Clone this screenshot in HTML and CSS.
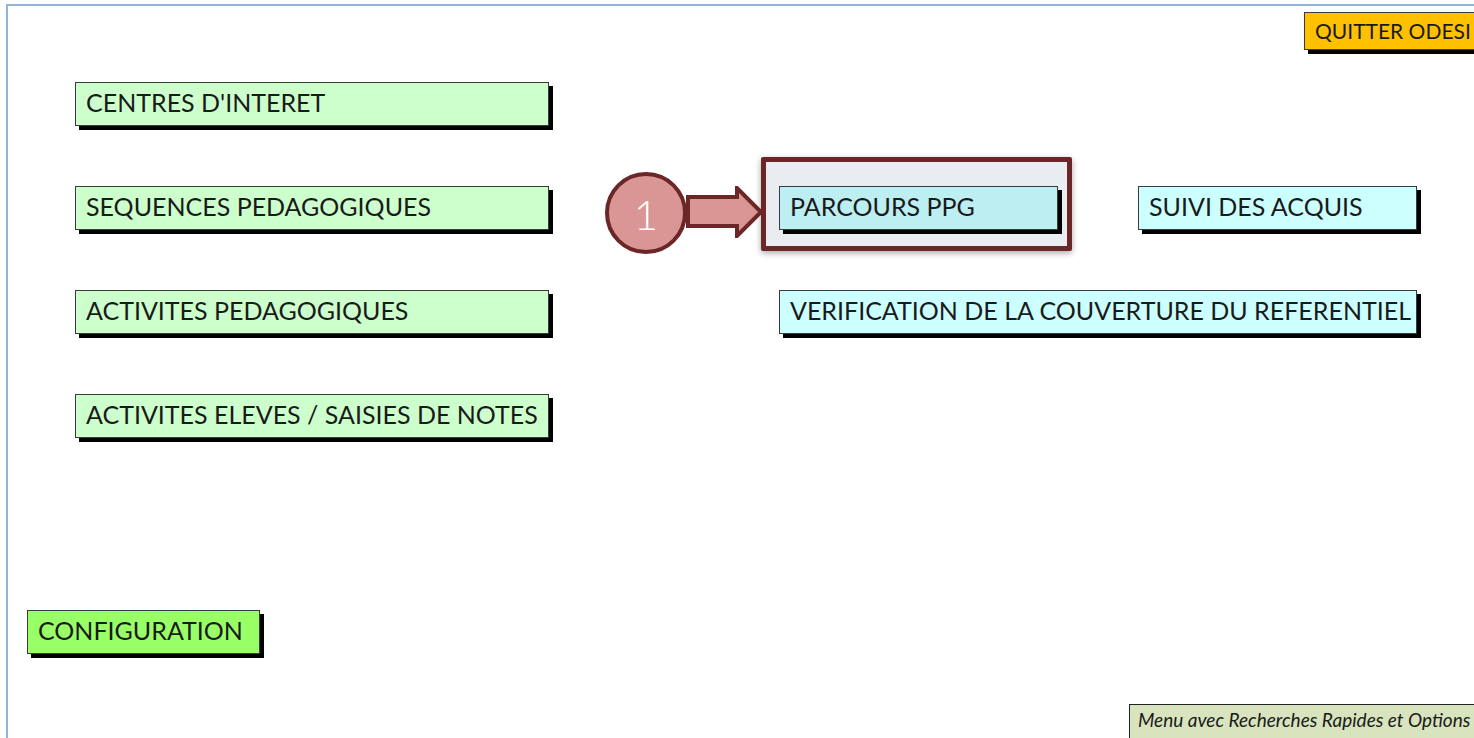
FILE: index.html
```html
<!DOCTYPE html>
<html lang="fr">
<head>
    <meta charset="UTF-8">
    <title>ODESI - Menu principal</title>
    <link rel="stylesheet" href="styles.css">
</head>
<body>
<div class="frame">
    <div class="topbar">
        <div class="btn btn-quit">QUITTER ODESI</div>
    </div>

    <div class="menu">
        <div class="btn btn-green row1">CENTRES D'INTERET</div>

        <div class="btn btn-green row2">SEQUENCES PEDAGOGIQUES</div>
        <div class="pointer-cell row2">
            <div class="annotation">
                <div class="highlight"></div>
                <div class="bubble">1</div>
                <svg class="arrow" width="78" height="52" viewBox="0 0 78 52">
                    <polygon points="2,11 51,11 51,2 75,26 51,50 51,40 2,40"
                             fill="#d99694" stroke="#6b2727" stroke-width="4" stroke-linejoin="miter"/>
                </svg>
            </div>
            <div class="btn btn-ppg">PARCOURS PPG</div>
        </div>
        <div class="btn btn-cyan row2 col3">SUIVI DES ACQUIS</div>

        <div class="btn btn-green row3">ACTIVITES PEDAGOGIQUES</div>
        <div class="btn btn-cyan row3 span2">VERIFICATION DE LA COUVERTURE DU REFERENTIEL</div>

        <div class="btn btn-green row4">ACTIVITES ELEVES / SAISIES DE NOTES</div>
    </div>

    <div class="btn btn-config">CONFIGURATION</div>

    <div class="footer-label">Menu avec Recherches Rapides et Options</div>
</div>
</body>
</html>
```

FILE: styles.css
```css
body {
    margin: 0;
    overflow: hidden;
    background-color: #fff;
    font-family: Lato, "Open Sans", sans-serif;
    color: #1a1a1a;
}
.frame {
    margin: 4px 0 0 6px;
    height: 800px;
    border-top: 2px solid #95b3d7;
    border-left: 2px solid #95b3d7;
}
.topbar {
    height: 44px;
    padding: 6px 0 0 1296px;
    white-space: nowrap;
    box-sizing: border-box;
}
.btn {
    box-sizing: border-box;
    height: 44px;
    padding: 0 10px 4px;
    display: flex;
    align-items: center;
    font-size: 25px;
    white-space: nowrap;
    border: 1px solid #3a3a3a;
    box-shadow: 4px 4px 0 #000;
}
.btn-quit {
    display: inline-flex;
    height: 38px;
    width: 200px;
    padding-bottom: 2px;
    font-size: 21px;
    background-color: #ffc000;
}
.menu {
    margin-top: 32px;
    padding-left: 67px;
    display: grid;
    grid-template-columns: 704px 359px 279px;
    grid-auto-rows: 44px;
    row-gap: 60px;
}
.btn-green {
    grid-column: 1;
    width: 474px;
    background-color: #ccffcc;
}
.row1 { grid-row: 1; }
.row2 { grid-row: 2; }
.row3 { grid-row: 3; }
.row4 { grid-row: 4; }
.col3 { grid-column: 3; }
.btn-cyan {
    background-color: #ccffff;
}
.span2 {
    grid-column: 2 / span 2;
}
.pointer-cell {
    grid-column: 2;
    position: relative;
    width: 279px;
}
.btn-ppg {
    position: relative;
    z-index: 1;
    background-color: #bdeef2;
}
.annotation {
    position: absolute;
    left: 0;
    top: 0;
}
.highlight {
    position: absolute;
    left: -18px;
    top: -29px;
    width: 311px;
    height: 94px;
    box-sizing: border-box;
    border: 5px solid #6b2727;
    border-radius: 2px;
    background-color: #e9edf2;
    box-shadow: 0 2px 6px rgba(0, 0, 0, 0.35);
}
.bubble {
    position: absolute;
    left: -174px;
    top: -14px;
    width: 82px;
    height: 82px;
    box-sizing: border-box;
    padding-top: 2px;
    border: 4px solid #6b2727;
    border-radius: 50%;
    background-color: #d99694;
    color: #fff;
    font-size: 42px;
    font-weight: 300;
    display: flex;
    align-items: center;
    justify-content: center;
}
.arrow {
    position: absolute;
    left: -93px;
    top: 0;
}
.btn-config {
    margin: 172px 0 0 19px;
    width: 233px;
    background-color: #99ff66;
}
.footer-label {
    margin: 50px 0 0 1121px;
    height: 40px;
    width: 400px;
    box-sizing: border-box;
    padding: 3px 8px;
    font-size: 19px;
    font-style: italic;
    white-space: nowrap;
    border: 1px solid #222;
    background-color: #d7e4bd;
}
```
